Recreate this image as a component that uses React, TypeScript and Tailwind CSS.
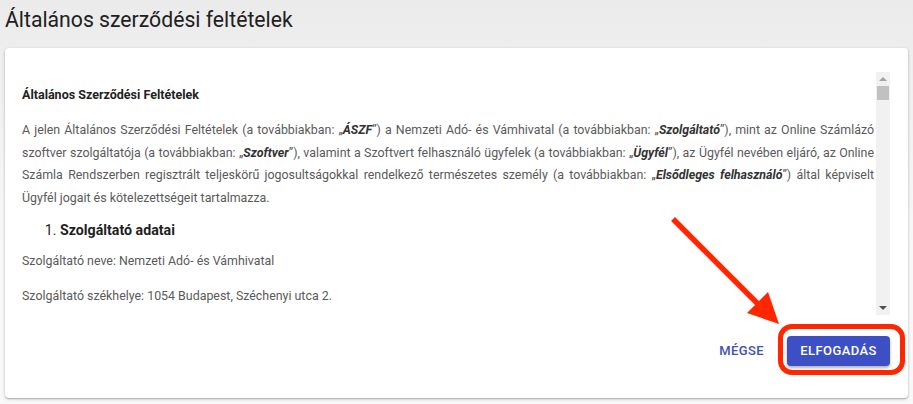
import React from "react";

const lines: React.ReactNode[] = [
  <>
    A jelen Általános Szerződési Feltételek (a továbbiakban: „<b><i>ÁSZF</i></b>”) a Nemzeti Adó- és Vámhivatal (a
    továbbiakban: „<b><i>Szolgáltató</i></b>”), mint az Online Számlázó
  </>,
  <>
    szoftver szolgáltatója (a továbbiakban: „<b><i>Szoftver</i></b>”), valamint a Szoftvert felhasználó ügyfelek (a
    továbbiakban: „<b><i>Ügyfél</i></b>”), az Ügyfél nevében eljáró, az Online
  </>,
  <>
    Számla Rendszerben regisztrált teljeskörű jogosultságokkal rendelkező természetes személy (a továbbiakban: „
    <b><i>Elsődleges felhasználó</i></b>”) által képviselt
  </>,
];

/** Thin scrollbar like the browser default */
function Scrollbar() {
  return (
    <div className="flex w-[14px] shrink-0 flex-col items-center bg-[#f1f1f1]">
      <div className="mt-[5px] h-0 w-0 border-x-[4px] border-b-[4px] border-x-transparent border-b-[#a3a3a3]" />
      <div className="mt-[5px] h-[14px] w-[12px] bg-[#c1c1c1]" />
      <div className="flex-1" />
      <div className="mb-[5px] h-0 w-0 border-x-[4px] border-t-[4px] border-x-transparent border-t-[#505050]" />
    </div>
  );
}

export default function App() {
  return (
    <div
      className="relative h-[404px] w-[913px] overflow-hidden bg-gradient-to-b from-[#ebebeb] to-[#f8f8f8] to-[60%]"
      style={{ fontFamily: "Roboto, 'Liberation Sans', sans-serif" }}
    >
      {/* Page title */}
      <h1 className="h-[48px] pl-[5px] pt-[5px] text-[21.2px] leading-[30px] text-[#212121]">
        Általános szerződési feltételek
      </h1>

      {/* Card */}
      <div className="mx-[5px] flex h-[350px] flex-col rounded bg-white shadow-[0_1px_3px_rgba(0,0,0,0.25),0_1px_1px_rgba(0,0,0,0.12)]">
        <div className="mt-[24px] flex h-[243px] pl-[17px] pr-[18px]">
          <div className="flex-1 overflow-hidden pr-[2px] text-[12.4px] leading-[22.4px] text-[#5a5a5a]">
            <div className="mt-[12px] text-[12.5px] font-bold text-[#222]">Általános Szerződési Feltételek</div>
            <div className="mt-[13px]">
              {lines.map((l, i) => (
                <div key={i} className="whitespace-nowrap text-justify [text-align-last:justify] [&_b]:text-[#333]">
                  {l}
                </div>
              ))}
              <div>Ügyfél jogait és kötelezettségeit tartalmazza.</div>
            </div>
            <ol className="mt-[10px] list-decimal pl-[38px] text-[14.2px] leading-[22px] text-[#1e1e1e]">
              <li>
                <b>Szolgáltató adatai</b>
              </li>
            </ol>
            <div className="mt-[9px]">Szolgáltató neve: Nemzeti Adó- és Vámhivatal</div>
            <div className="mt-[12.5px]">Szolgáltató székhelye: 1054 Budapest, Széchenyi utca 2.</div>
          </div>
          <Scrollbar />
        </div>

        {/* Actions */}
        <div className="mt-[21px] flex items-center justify-end pr-[18px]">
          <button className="mr-[23px] text-[13px] font-medium tracking-[0.03em] text-[#3f51b5]">MÉGSE</button>
          <button className="h-[30px] w-[103px] rounded bg-[#3c4fc5] text-[13px] font-medium tracking-[0.03em] text-white shadow-[0_2px_3px_rgba(0,0,0,0.3)]">
            ELFOGADÁS
          </button>
        </div>
      </div>

      {/* Red highlight around the accept button */}
      <div className="absolute left-[778px] top-[324px] h-[51px] w-[127px] rounded-[14px] border-[5px] border-[#ff2600]" />

      {/* Red arrow */}
      <svg className="absolute left-0 top-0" width="913" height="404" viewBox="0 0 913 404">
        <line x1="673" y1="219" x2="760" y2="306" stroke="#ff2600" strokeWidth="5.5" />
        <polygon points="779,324 747,313 768,292" fill="#ff2600" />
      </svg>
    </div>
  );
}
